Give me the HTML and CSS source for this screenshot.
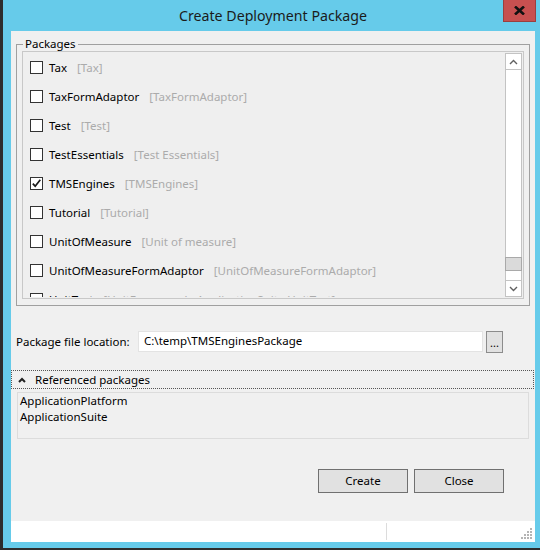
FILE: index.html
```html
<!DOCTYPE html>
<html>
<head>
<meta charset="utf-8">
<title>Create Deployment Package</title>
<link rel="stylesheet" href="styles.css">
</head>
<body>
<div class="window">
  <div class="titlebar">
    <div class="title-spacer"></div>
    <div class="title">Create Deployment Package</div>
    <div class="title-actions">
      <div class="close-btn">
        <svg width="11" height="9" viewBox="0 0 11 9"><path d="M1 0.5 L10 8.5 M10 0.5 L1 8.5" stroke="#111" stroke-width="2.6" fill="none"/></svg>
      </div>
    </div>
  </div>
  <div class="client">
    <fieldset class="group">
      <legend>Packages</legend>
      <div class="listbox">
        <div class="items">
          <div class="item"><span class="cb"></span><span class="name">Tax</span><span class="alias">[Tax]</span></div>
          <div class="item"><span class="cb"></span><span class="name">TaxFormAdaptor</span><span class="alias">[TaxFormAdaptor]</span></div>
          <div class="item"><span class="cb"></span><span class="name">Test</span><span class="alias">[Test]</span></div>
          <div class="item"><span class="cb"></span><span class="name">TestEssentials</span><span class="alias">[Test Essentials]</span></div>
          <div class="item"><span class="cb checked"><svg width="11" height="11" viewBox="0 0 11 11"><path d="M1.8 5.6 L4.2 8.2 L9.3 1.8" stroke="#1a1a1a" stroke-width="1.7" fill="none"/></svg></span><span class="name">TMSEngines</span><span class="alias">[TMSEngines]</span></div>
          <div class="item"><span class="cb"></span><span class="name">Tutorial</span><span class="alias">[Tutorial]</span></div>
          <div class="item"><span class="cb"></span><span class="name">UnitOfMeasure</span><span class="alias">[Unit of measure]</span></div>
          <div class="item"><span class="cb"></span><span class="name">UnitOfMeasureFormAdaptor</span><span class="alias">[UnitOfMeasureFormAdaptor]</span></div>
          <div class="item"><span class="cb"></span><span class="name">UnitTest</span><span class="alias">[UnitFramework, ApplicationSuite.UnitTest]</span></div>
        </div>
        <div class="scrollbar">
          <div class="sb-btn sb-up">
            <svg width="9" height="6" viewBox="0 0 9 6"><path d="M1 5 L4.5 1.5 L8 5" stroke="#606060" stroke-width="1.4" fill="none"/></svg>
          </div>
          <div class="sb-track"><div class="sb-thumb"></div></div>
          <div class="sb-btn sb-down">
            <svg width="9" height="6" viewBox="0 0 9 6"><path d="M1 1 L4.5 4.5 L8 1" stroke="#606060" stroke-width="1.4" fill="none"/></svg>
          </div>
        </div>
      </div>
    </fieldset>

    <div class="file-row">
      <span class="file-label">Package file location:</span>
      <div class="file-input">C:\temp\TMSEnginesPackage</div>
      <div class="browse-btn">...</div>
    </div>

    <div class="ref-header">
      <svg width="8" height="6" viewBox="0 0 8 6"><path d="M1 5 L4 2 L7 5" stroke="#222" stroke-width="2" fill="none"/></svg>
      <span class="ref-title">Referenced packages</span>
    </div>
    <div class="ref-list">
      <div>ApplicationPlatform</div>
      <div>ApplicationSuite</div>
    </div>

    <div class="actions">
      <div class="btn">Create</div>
      <div class="btn">Close</div>
    </div>

    <div class="statusbar">
      <div class="status-pane"></div>
      <div class="status-pane-right"></div>
      <svg class="grip" width="12" height="12" viewBox="0 0 12 12" fill="#b4b4b4">
        <rect x="9" y="0" width="2" height="2"/>
        <rect x="6" y="3" width="2" height="2"/><rect x="9" y="3" width="2" height="2"/>
        <rect x="3" y="6" width="2" height="2"/><rect x="6" y="6" width="2" height="2"/><rect x="9" y="6" width="2" height="2"/>
        <rect x="0" y="9" width="2" height="2"/><rect x="3" y="9" width="2" height="2"/><rect x="6" y="9" width="2" height="2"/><rect x="9" y="9" width="2" height="2"/>
      </svg>
    </div>
  </div>
</div>
</body>
</html>
```

FILE: styles.css
```css
* { box-sizing: border-box; }
html, body { margin: 0; padding: 0; }
body {
  width: 540px;
  height: 550px;
  overflow: hidden;
  font-family: "Noto Sans", "Open Sans", sans-serif;
  font-size: 11.5px;
  color: #000;
  background: #66cbea;
}
.window {
  width: 540px;
  height: 550px;
  background: #66cbea;
  border-left: 3px solid #2d2d2d;
  border-bottom: 2px solid #2d2d2d;
  padding: 0 5px 6px 8px;
  display: flex;
  flex-direction: column;
}
.titlebar {
  height: 31px;
  flex: none;
  display: grid;
  grid-template-columns: 1fr auto 1fr;
  align-items: start;
}
.title {
  padding-top: 6px;
  font-size: 14.2px;
  line-height: 20px;
  color: #1b1b1b;
  white-space: nowrap;
}
.title-actions {
  display: flex;
  justify-content: flex-end;
}
.close-btn {
  width: 33px;
  height: 22px;
  margin-right: -1px;
  background: #c75050;
  border: 1px solid #9b3f3f;
  border-top: none;
  display: flex;
  align-items: center;
  justify-content: center;
}
.client {
  flex: 1;
  background: #f0f0f0;
  display: flex;
  flex-direction: column;
  min-height: 0;
}
.group {
  margin: 6px 5px 0 5px;
  padding: 0 5px 6px 5px;
  border: 1px solid #a0a0a0;
  min-width: 0;
}
.group legend {
  padding: 0 2px;
  margin-left: 1px;
  line-height: 14px;
  font-size: 11.5px;
}
.listbox {
  height: 248px;
  border: 1px solid #c8c8c8;
  background: #efefef;
  padding: 1px 1px 1px 0;
  display: flex;
  overflow: hidden;
}
.items {
  flex: 1;
  min-width: 0;
  overflow: hidden;
}
.item {
  height: 29px;
  display: flex;
  align-items: center;
  padding-left: 7px;
  white-space: nowrap;
}
.cb {
  width: 13px;
  height: 13px;
  flex: none;
  border: 1px solid #333;
  background: #fff;
  margin-right: 6px;
  display: flex;
  align-items: center;
  justify-content: center;
}
.alias {
  margin-left: 10px;
  color: #ababab;
}
.scrollbar {
  width: 17px;
  flex: none;
  border: 1px solid #c3c3c3;
  background: #fff;
  display: flex;
  flex-direction: column;
}
.sb-btn {
  height: 16px;
  flex: none;
  display: flex;
  align-items: center;
  justify-content: center;
  background: #fff;
}
.sb-up { border-bottom: 1px solid #c3c3c3; }
.sb-down { border-top: 1px solid #c3c3c3; }
.sb-track {
  flex: 1;
  background: #fff;
}
.sb-thumb {
  margin-top: 187px;
  height: 14px;
  background: #dadada;
  border: 1px solid #a9a9a9;
  margin-left: -1px;
  margin-right: -1px;
}
.file-row {
  margin: 25px 0 0 5px;
  height: 21px;
  display: flex;
  align-items: center;
}
.file-label {
  width: 122px;
  flex: none;
}
.file-input {
  width: 345px;
  height: 21px;
  background: #fff;
  border: 1px solid #e3e3e3;
  padding-left: 5px;
  line-height: 18px;
  white-space: nowrap;
}
.browse-btn {
  width: 17px;
  height: 22px;
  margin-left: 3px;
  background: #e1e1e1;
  border: 1px solid #8c8c8c;
  text-align: center;
  line-height: 22px;
  font-size: 11px;
}
.ref-header {
  margin: 18px 1px 0 0;
  height: 19px;
  border: 1px dotted #555;
  display: flex;
  align-items: center;
  padding-left: 6px;
}
.ref-title {
  margin-left: 9px;
}
.ref-list {
  margin: 3px 6px 0 6px;
  height: 47px;
  border: 1px solid #dcdcdc;
  padding: 0 2px;
  line-height: 16px;
}
.actions {
  margin-top: 30px;
  display: flex;
  justify-content: flex-end;
  gap: 6px;
  padding-right: 31px;
}
.btn {
  width: 90px;
  height: 24px;
  background: #e1e1e1;
  border: 1px solid #707070;
  text-align: center;
  line-height: 22px;
}
.statusbar {
  margin-top: auto;
  height: 21px;
  flex: none;
  background: #fff;
  display: flex;
  align-items: stretch;
}
.status-pane {
  width: 376px;
  margin: 2px 0;
  border-right: 1px solid #dcdcdc;
}
.status-pane-right {
  flex: 1;
}
.grip {
  align-self: flex-end;
  margin: 0 2px 2px 0;
}
```
